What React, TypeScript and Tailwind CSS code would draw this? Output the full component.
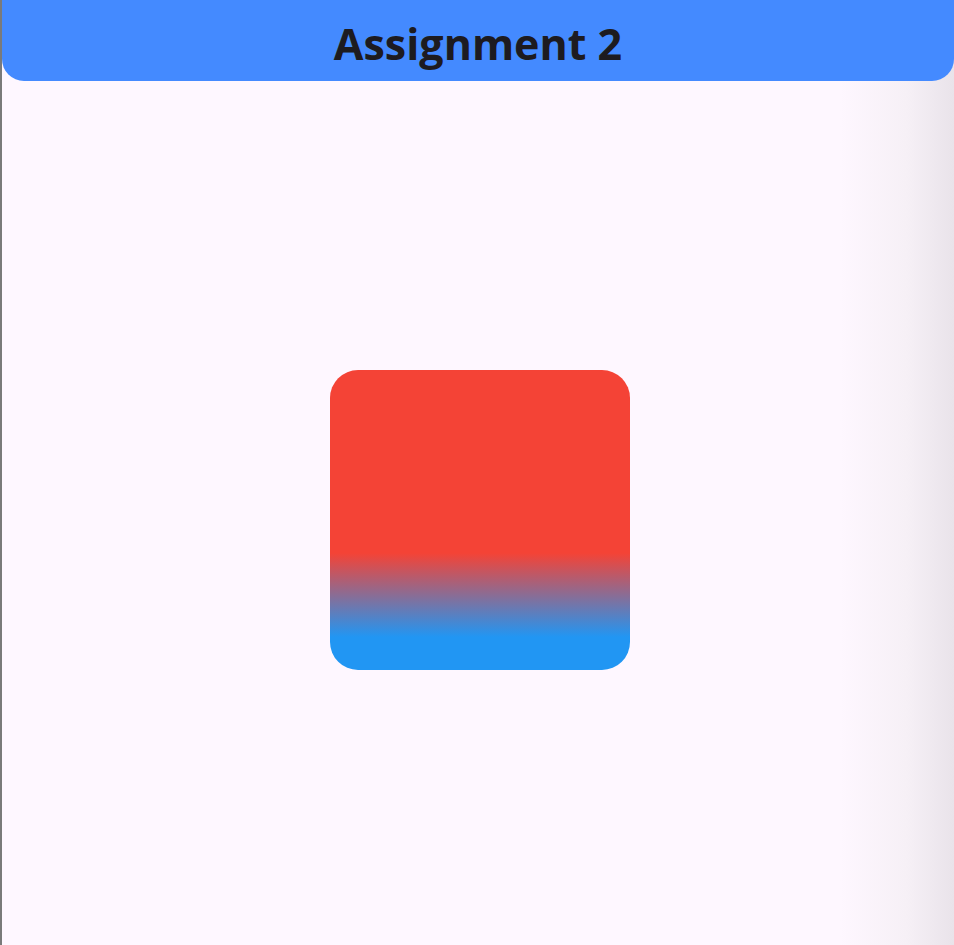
export default function App() {
  return (
    <div className="flex h-[945px] w-full overflow-hidden bg-[#7a7a7a] pl-[2px]" style={{ fontFamily: "'Open Sans', 'Noto Sans', sans-serif" }}>
      <div className="flex flex-1 flex-col bg-[linear-gradient(to_right,#fef7ff_0%,#fef7ff_88%,#f6f0f6_95%,#e9e3ea_100%)]">
        {/* app bar */}
        <header className="flex h-[81px] items-center justify-center rounded-b-[22px] bg-[#448aff] pt-[6px]">
          <h1 className="text-[43px] font-bold leading-none text-[#1d1b20]">Assignment 2</h1>
        </header>

        {/* body */}
        <main className="flex flex-1 items-center justify-center pl-[4px] pt-[14px]">
          <div className="h-[300px] w-[300px] rounded-[28px] bg-[linear-gradient(to_bottom,#f44336_61%,#2196f3_89%)]" />
        </main>
      </div>
    </div>
  );
}
